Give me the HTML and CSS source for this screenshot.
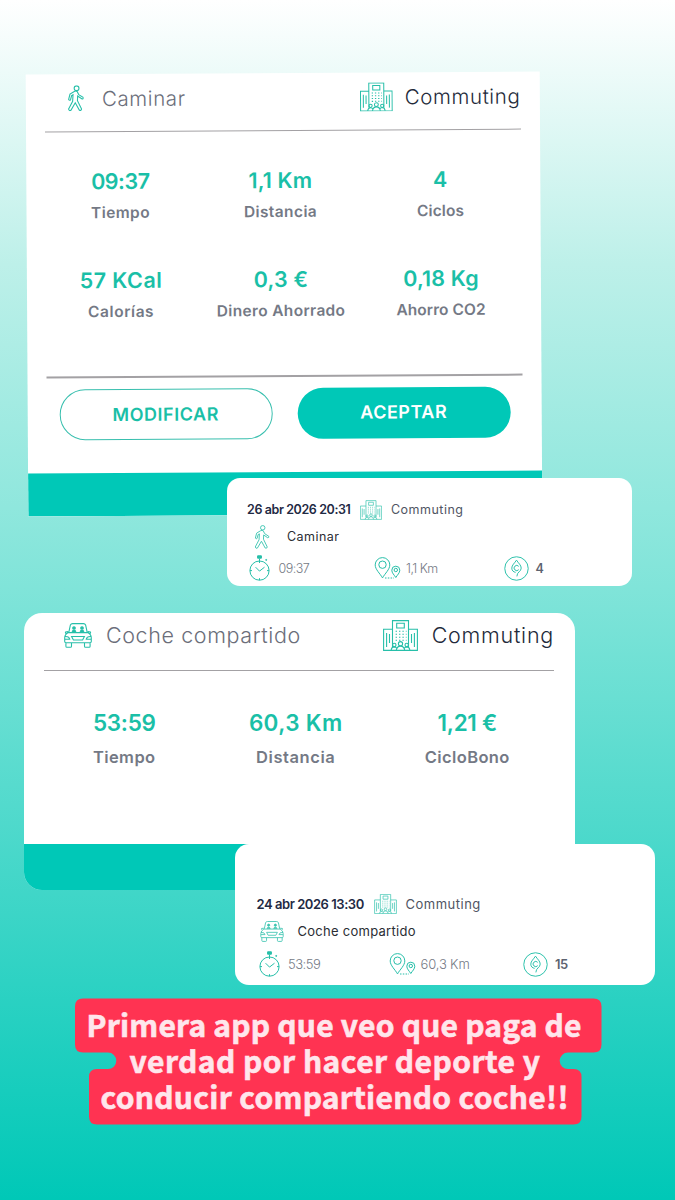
FILE: index.html
```html
<!DOCTYPE html>
<html lang="es">
<head>
<meta charset="utf-8">
<title>Commuting</title>
<link rel="stylesheet" href="styles.css">
</head>
<body>
<svg class="sprite" aria-hidden="true">
  <symbol id="walker" viewBox="0 0 16 26">
    <circle cx="8.8" cy="3" r="2.4"/>
    <path d="M6.5 6.2 2.2 8.8 .8 14.2q.9 1.3 1.9.3L3.8 10.4l1.4-.8L4.8 16 .7 23.8Q1.4 26 3 25l4.4-7.4 4.1 7.4q1.9.7 2.2-1.2L9.6 15.4l.2-4.6 4.4 3q1.6 0 1.1-1.6l-4.4-2.8-1.5-3.1q-1.4-.9-2.9-.1z"/>
  </symbol>
  <symbol id="building" viewBox="0 0 35 31">
    <path d="M9.5 9.2H.6v21.2h33.8V9.2h-8.9M9.5 27V.6h16V27M13.7 3.2h7.6V8h-7.6zM3.6 13v14M6.5 14v9M31.4 13v14M28.5 14v9"/>
    <path stroke-dasharray="1.4 2" d="M12.6 11.2h11M12.6 14.2h11M12.6 17.2h11M12.6 20.2h11"/>
    <circle cx="11.3" cy="25" r="1.7"/><circle cx="17.5" cy="23.7" r="2.1"/><circle cx="23.7" cy="25" r="1.7"/>
    <path d="M8.2 30.4q.2-3.4 3.1-3.5 1.8 0 2.5 1.5M13.3 30.4q.5-4.3 4.2-4.3t4.2 4.3M21.2 28.4q.8-1.5 2.5-1.5 2.9.1 3.1 3.5"/>
  </symbol>
  <symbol id="car" viewBox="0 0 28 25">
    <path d="M4.8 9.4 6.4 2Q7 .6 8.500.6h11q1.500 0 2.100 1.400l1.600 7.400M4 9.600h20M4.300 9.600Q.7 11.500.7 15v3.600q0 1.200 1.300 1.200h24q1.300 0 1.300-1.200V15q0-3.500-3.600-5.400M4.200 8.600 1.600 8.900q-.6 1.300.8 1.700M23.800 8.600l2.600.3q.6 1.300-.8 1.700M1.900 20v3.200q0 1.100 1 1.100h3.600q1 0 1-1.100V20M20.500 20v3.200q0 1.100 1 1.100h3.600q1 0 1-1.100V20M7.600 13.500h12.800L18.600 17H9.400zM.9 13.600q4.200-.4 4.800 2.600H1M27.100 13.600q-4.200-.4-4.800 2.600H27"/>
    <g class="solid"><circle cx="10" cy="5" r="1.300"/><circle cx="18" cy="5" r="1.300"/><path d="M8.100 9.300q.1-1.900 1.900-1.900t1.900 1.900M16.100 9.300q.1-1.900 1.900-1.900t1.900 1.900"/></g>
  </symbol>
  <symbol id="timer" viewBox="0 0 22 26">
    <circle cx="10.5" cy="15.6" r="9.6"/>
    <path d="M6.6 12.2l3.9 3.9 5-3.9M10.5 6v2M10.5 23.2v2M1 15.600h2M18 15.600h2M10.500 3.500V6"/>
    <g class="solid"><path d="M8.6.8h3.8v2.400H8.600z"/><circle cx="17.200" cy="4.900" r=".5"/></g>
  </symbol>
  <symbol id="pins" viewBox="0 0 26 22">
    <path d="M8 20.900C5.500 16.400.7 12.500.7 7.900a7.300 7.300 0 0 1 14.600 0C15.300 12.500 10.500 16.400 8 20.900zM21.300 20.500c-1.500-2.500-4-4.500-4-7.300a4 4 0 0 1 8 0c0 2.800-2.500 4.800-4 7.300z"/>
    <circle cx="8" cy="7.700" r="3.700"/><circle cx="21.300" cy="13" r="1.700"/>
    <path stroke-dasharray="1.500 1.300" d="M10.500 21h9"/>
  </symbol>
  <symbol id="coin" viewBox="0 0 26 26">
    <circle cx="13" cy="13" r="12.200"/>
    <path d="M13 4.300c-2 3.200-4.900 5.200-4.900 8.300 0 2.400 1.600 4.100 4 4.400M13 4.300c2 3.200 4.900 5.200 4.900 8.300 0 3.800-4.500 3.800-4.500 8.600M15.300 10.800a2.700 2.700 0 1 0 0 3.400"/>
  </symbol>
</svg>

<main class="story">
  <section class="card summary walk">
    <header class="head">
      <svg class="icon i-walker"><use href="#walker"/></svg>
      <span class="mode">Caminar</span>
      <svg class="icon i-building"><use href="#building"/></svg>
      <span class="purpose">Commuting</span>
    </header>
    <div class="stats">
      <div class="stat"><b class="t0">09:37</b><span>Tiempo</span></div>
      <div class="stat"><b>1,1 Km</b><span>Distancia</span></div>
      <div class="stat"><b>4</b><span class="t1">Ciclos</span></div>
      <div class="stat"><b class="t2">57 KCal</b><span class="t3">Calorías</span></div>
      <div class="stat"><b>0,3 €</b><span class="t4">Dinero Ahorrado</span></div>
      <div class="stat"><b>0,18 Kg</b><span class="t1">Ahorro CO2</span></div>
    </div>
    <div class="actions">
      <button class="btn outline">MODIFICAR</button>
      <button class="btn filled">ACEPTAR</button>
    </div>
    <footer class="bar"></footer>
  </section>

  <section class="card summary ride">
    <header class="head">
      <svg class="icon i-car"><use href="#car"/></svg>
      <span class="mode">Coche compartido</span>
      <svg class="icon i-building"><use href="#building"/></svg>
      <span class="purpose">Commuting</span>
    </header>
    <div class="stats">
      <div class="stat"><b class="t0">53:59</b><span>Tiempo</span></div>
      <div class="stat"><b>60,3 Km</b><span class="t3">Distancia</span></div>
      <div class="stat"><b class="t0">1,21 €</b><span>CicloBono</span></div>
    </div>
    <footer class="bar"></footer>
  </section>

  <section class="card entry entry-walk">
    <div class="row top">
      <b class="date">26 abr 2026 20:31</b>
      <svg class="icon"><use href="#building"/></svg>
      <span class="tag">Commuting</span>
    </div>
    <div class="row kind"><svg class="icon"><use href="#walker"/></svg><span>Caminar</span></div>
    <div class="row facts">
      <div class="fact"><svg class="icon i-timer"><use href="#timer"/></svg><span>09:37</span></div>
      <div class="fact near"><svg class="icon i-pins"><use href="#pins"/></svg><span>1,1 Km</span></div>
      <div class="fact"><svg class="icon i-coin"><use href="#coin"/></svg><b>4</b></div>
    </div>
  </section>

  <section class="card entry entry-ride">
    <div class="row top">
      <b class="date">24 abr 2026 13:30</b>
      <svg class="icon"><use href="#building"/></svg>
      <span class="tag">Commuting</span>
    </div>
    <div class="row kind"><svg class="icon"><use href="#car"/></svg><span>Coche compartido</span></div>
    <div class="row facts">
      <div class="fact"><svg class="icon i-timer"><use href="#timer"/></svg><span>53:59</span></div>
      <div class="fact near"><svg class="icon i-pins"><use href="#pins"/></svg><span>60,3 Km</span></div>
      <div class="fact"><svg class="icon i-coin"><use href="#coin"/></svg><b>15</b></div>
    </div>
  </section>

  <div class="caption">
    <svg class="blob" viewBox="0 0 527 127"><path d="M8 .5H518.500q8 0 8 8V46.500q0 8-8 8H493a8.300 8.300 0 0 0 0 16.600h5.500q8 0 8 8V118.500q0 8-8 8H22q-8 0-8-8V79.100q0-8 8-8H33a8.300 8.300 0 0 0 0-16.600H8q-8 0-8-8V8.500q0-8 8-8z"/></svg>
    <p class="l1">Primera app que veo que paga de</p>
    <p class="l2">verdad por hacer deporte y</p>
    <p class="l3">conducir compartiendo coche!!</p>
  </div>
</main>
</body>
</html>
```
FILE: styles.css
```css
* { box-sizing: border-box; }
body { margin: 0; font-family: "Inter", "Liberation Sans", sans-serif; }
.sprite { position: absolute; width: 0; height: 0; }
.story {
  position: relative;
  width: 675px;
  height: 1200px;
  overflow: hidden;
  background: linear-gradient(#fff 0, #bdf0e9 22%, #80e4d9 49%, #00c8b7 100%);
}
.icon { flex: none; fill: none; stroke: #27bfa9; stroke-width: 1.1; overflow: visible; }
.solid { fill: #27bfa9; }

/* Stickers placed freely on the story canvas */
.card { position: absolute; background: #fff; display: flex; flex-direction: column; overflow: hidden; }
.walk { left: 26.5px; top: 72.5px; width: 513.5px; height: 442px; transform: rotate(-.34deg); }
.ride { left: 23.5px; top: 613px; width: 551.5px; height: 277px; border-radius: 18px; }
.entry-walk { left: 227px; top: 478px; width: 405px; height: 108px; border-radius: 13px; padding: 19px 0 0 20px; }
.entry-ride { left: 235px; top: 844px; width: 420px; height: 141px; border-radius: 14px; padding: 47px 0 0 21.5px; }

/* Summary cards */
.head { display: flex; align-items: center; white-space: nowrap; font-weight: 300; }
.mode { color: #6b6e7a; margin-right: auto; }
.purpose { color: #232a3a; }
.bar { margin-top: auto; background: #00c8b7; }
.stats { display: grid; }
.stat { display: flex; flex-direction: column; align-items: center; white-space: nowrap; font-weight: 600; }
.stat b { color: #1abfa7; font-weight: 600; letter-spacing: .35px; }
.stat span { color: #747985; letter-spacing: .4px; }
.stat .t0 { letter-spacing: -.3px; }
.stat .t1 { letter-spacing: .08px; }
.stat .t2 { letter-spacing: .63px; }
.stat .t3 { letter-spacing: .57px; }
.stat .t4 { letter-spacing: .33px; }

.walk .head { height: 58px; margin: 0 19px; padding: 0 0 8.5px 23px; border-bottom: 1.5px solid #a3a1a4; font-size: 20.5px; letter-spacing: .6px; }
.walk .i-walker { width: 16px; height: 26px; margin-right: 18px; }
.walk .i-building { width: 33px; height: 29px; margin-right: 12px; }
.walk .stats { grid-template-columns: repeat(3, 160px); row-gap: 35px; margin: 32.5px 0 0 14px; }
.walk .stat { font-size: 15.5px; line-height: 32px; }
.walk .stat b { font-size: 21.5px; letter-spacing: .15px; }
.walk .stat .t0 { letter-spacing: -.5px; }
.walk .stat .t2 { letter-spacing: .45px; }
.walk .bar { height: 43px; }
.actions { display: flex; gap: 25px; margin: 48px 18.5px 0 19px; padding: 11px 0 0 13px; border-top: 2.5px solid #a3a1a4; }
.btn { width: 213px; height: 51px; padding: 0; border-radius: 26px; font: 600 18px/50px "Inter", sans-serif; letter-spacing: .52px; text-indent: -1px; }
.outline { background: #fff; border: 1.5px solid #38bfae; color: #1abfa7; }
.filled { background: #00c8b7; border: 0; color: #fff; }

.ride .head { height: 58px; margin: 0 21px 0 20.5px; padding: 0 0 12.5px 20px; border-bottom: 1.5px solid #a3a1a4; font-size: 21.5px; letter-spacing: .6px; }
.ride .purpose { letter-spacing: .75px; }
.ride .i-car { width: 28px; height: 25px; margin-right: 14px; }
.ride .i-building { width: 35px; height: 31px; margin-right: 13.5px; }
.ride .stats { grid-template-columns: repeat(3, 171.5px); margin: 35px 0 0 15px; }
.ride .stat { font-size: 16.5px; line-height: 34px; }
.ride .stat b { font-size: 22.5px; }
.ride .bar { height: 46.5px; }

/* History entries */
.row { display: flex; align-items: center; white-space: nowrap; font-size: 12.5px; }
.entry .icon { stroke-width: 1; }
.top { height: 26px; }
.date { width: 104px; color: #1f2a44; font-weight: 600; letter-spacing: -.4px; }
.entry .top .icon { width: 22px; height: 20px; margin: 0 9px; stroke-width: 1.2; opacity: .85; }
.tag { color: #4f5563; letter-spacing: .48px; }
.kind { height: 28px; color: #2a2d33; letter-spacing: .46px; }
.kind .icon { height: 24px; width: 16px; margin: 0 17px 0 7px; opacity: .9; }
.facts { height: 36px; display: grid; grid-template-columns: 128px 129px auto; color: #757a85; font-weight: 300; letter-spacing: -.52px; }
.fact { display: flex; align-items: center; gap: 7.5px; }
.fact.near { gap: 4px; }
.fact b { font-weight: 600; color: #5d6370; }
.i-timer { width: 22px; height: 26px; margin-left: 2px; }
.i-pins { width: 27px; height: 22px; }
.i-coin { width: 25px; height: 25px; }
.entry-walk .i-pins { margin-left: -1px; margin-right: 1px; }
.entry-walk .fact b { margin-left: -1px; }

.entry-ride .row { font-size: 13px; }
.entry-ride .date { width: 108px; letter-spacing: -.45px; }
.entry-ride .top .icon { width: 23px; }
.entry-ride .tag { letter-spacing: .5px; }
.entry-ride .kind { letter-spacing: .27px; }
.entry-ride .kind .icon { width: 24px; height: 21px; margin: 0 14px 0 3px; }
.entry-ride .facts { height: 38px; grid-template-columns: 132px 134px auto; }
.entry-ride .near { gap: 5px; }
.entry-ride .near span { letter-spacing: -.15px; }

/* Caption */
.caption {
  position: absolute;
  left: 74.5px;
  top: 997.5px;
  width: 527px;
  height: 127px;
  padding-top: 8.5px;
  color: #ffe6ec;
  font: 700 30px/36px "Noto Sans CJK SC", "Noto Sans", sans-serif;
  -webkit-text-stroke: .6px #ffe6ec;
  white-space: nowrap;
}
.blob { position: absolute; inset: 0; width: 527px; height: 127px; fill: #ff3352; }
.caption p { position: relative; margin: 0; }
.l1 { padding-left: 12px; letter-spacing: .2px; }
.l2 { padding-left: 55px; letter-spacing: .46px; }
.l3 { padding-left: 26px; letter-spacing: .28px; }
```
